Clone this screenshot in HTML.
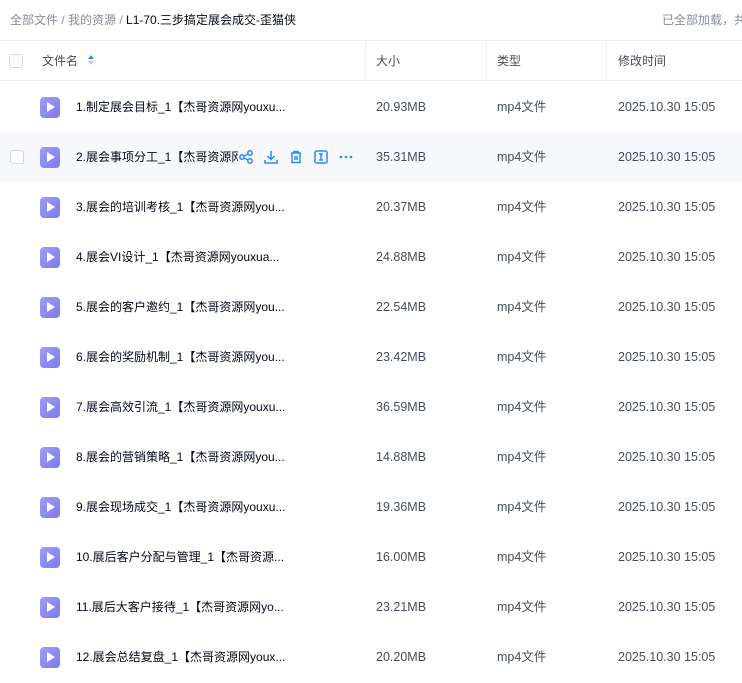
<!DOCTYPE html>
<html><head><meta charset="utf-8"><style>
*{margin:0;padding:0;box-sizing:border-box}
body{width:742px;height:683px;overflow:hidden;background:#fff;font-family:"Liberation Sans","Noto Sans CJK SC",sans-serif;color:#03081a;font-size:12px;line-height:16px}
.bc{position:absolute;top:12px;left:10px;font-size:12px;color:#878c9c;white-space:nowrap}
.bc b{font-weight:normal;color:#03081a}
.tr{position:absolute;top:12px;left:662px;font-size:12px;color:#878c9c;white-space:nowrap}
.hd{position:absolute;top:40px;left:0;width:742px;height:41px;border-top:1px solid #f0f0f2;border-bottom:1px solid #f0f0f2}
.hd span{position:absolute;top:12px;color:#454d5a;font-size:12px;line-height:16px}
.sep{position:absolute;top:0;width:1px;height:40px;background:#f0f0f2}
.cb{position:absolute;width:14px;height:14px;border:1px solid #d4d7de;border-radius:3px;background:#fff}
.row{position:absolute;left:0;width:742px;height:50px}
.row.h{background:#f7f8fc}
.ic{position:absolute;left:40px;top:15px;width:20px;height:21px;border-radius:4px;background:linear-gradient(135deg,#a09ef8,#7c79ee)}
.ic:after{content:"";position:absolute;left:7px;top:5px;border-left:8px solid #fff;border-top:5.5px solid transparent;border-bottom:5.5px solid transparent}
.nm{position:absolute;left:76px;top:17px;white-space:nowrap;font-size:12px;line-height:16px;height:16px}
.c{position:absolute;top:17px;color:#454d5a;font-size:12px;white-space:nowrap;line-height:16px;height:16px;font-size:12.5px}
.ops{position:absolute;left:238px;top:16px;width:124px;height:18px;background:#f7f8fc;display:flex;gap:9px;align-items:center}
.ops svg{width:16px;height:16px}
</style></head><body>
<div class="bc">全部文件 / 我的资源 / <b>L1-70.三步搞定展会成交-歪猫侠</b></div>
<div class="tr">已全部加载，共</div>
<div class="hd">
<div class="cb" style="left:9px;top:13px"></div>
<span style="left:42px">文件名</span>
<svg style="position:absolute;left:88px;top:14px" width="6" height="10"><path d="M3 0L6 4H0z" fill="#2b8cf7"/><path d="M3 10L6 6H0z" fill="#c8ccd6"/></svg>
<div class="sep" style="left:365px"></div><span style="left:376px">大小</span>
<div class="sep" style="left:486px"></div><span style="left:497px">类型</span>
<div class="sep" style="left:606px"></div><span style="left:618px">修改时间</span>
</div>
<div id="rows"></div>
<script>
var d=[["1.制定展会目标_1【杰哥资源网youxu...","20.93MB"],["2.展会事项分工_1【杰哥资源网","35.31MB"],["3.展会的培训考核_1【杰哥资源网you...","20.37MB"],["4.展会VI设计_1【杰哥资源网youxua...","24.88MB"],["5.展会的客户邀约_1【杰哥资源网you...","22.54MB"],["6.展会的奖励机制_1【杰哥资源网you...","23.42MB"],["7.展会高效引流_1【杰哥资源网youxu...","36.59MB"],["8.展会的营销策略_1【杰哥资源网you...","14.88MB"],["9.展会现场成交_1【杰哥资源网youxu...","19.36MB"],["10.展后客户分配与管理_1【杰哥资源...","16.00MB"],["11.展后大客户接待_1【杰哥资源网yo...","23.21MB"],["12.展会总结复盘_1【杰哥资源网youx...","20.20MB"]];
var h="";
d.forEach(function(r,i){
var y=82+i*50;
h+='<div class="row'+(i==1?' h':'')+'" style="top:'+y+'px">'+(i==1?'<div class="cb" style="left:10px;top:18px"></div>':'')+'<div class="ic"></div><div class="nm"'+(i==1?' style="width:162px;overflow:hidden"':'')+'>'+r[0]+'</div>';
if(i==1)h+='<div class="ops"><svg viewBox="0 0 16 16" fill="none" stroke="#2b8cf7" stroke-width="1.5"><circle cx="4" cy="8" r="2.2"/><circle cx="12" cy="4" r="2.2"/><circle cx="12" cy="12" r="2.2"/><path d="M6 7l4-2M6 9l4 2"/></svg><svg viewBox="0 0 16 16" fill="none" stroke="#2b8cf7" stroke-width="1.5"><path d="M8 2v8M4.5 7L8 10.5 11.5 7M2 11v3h12v-3"/></svg><svg viewBox="0 0 16 16" fill="none" stroke="#2b8cf7" stroke-width="1.5"><path d="M3 4h10M6 4V2.5h4V4M4 4v9.5h8V4M7 7v4M9 7v4"/></svg><svg viewBox="0 0 16 16" fill="none" stroke="#2b8cf7" stroke-width="1.5"><rect x="2" y="2" width="12" height="12" rx="1.5"/><path d="M6 5h4M6 11h4M8 5v6"/></svg><svg viewBox="0 0 16 16" fill="#2b8cf7"><circle cx="3" cy="8" r="1.3"/><circle cx="8" cy="8" r="1.3"/><circle cx="13" cy="8" r="1.3"/></svg></div>';
h+='<div class="c" style="left:376px">'+r[1]+'</div><div class="c" style="left:497px">mp4文件</div><div class="c" style="left:618px">2025.10.30 15:05</div></div>';
});
document.getElementById("rows").innerHTML=h;
</script>
</body></html>
